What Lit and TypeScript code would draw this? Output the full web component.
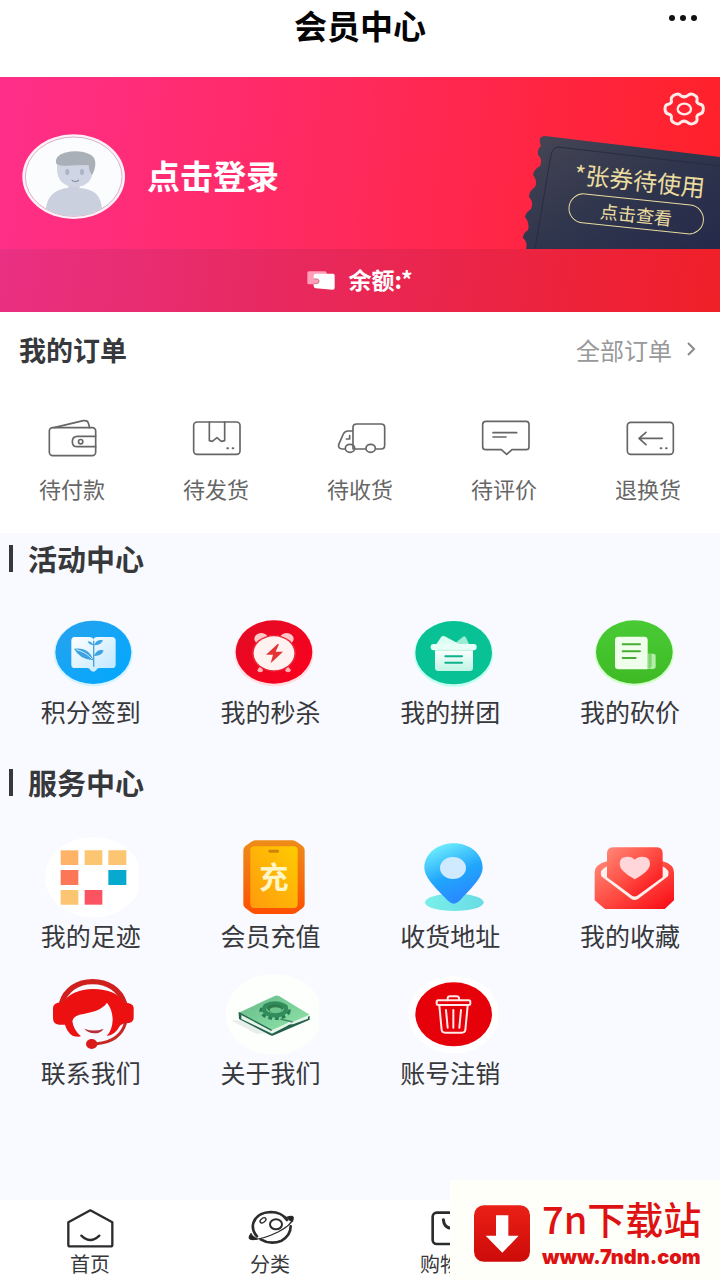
import { LitElement, html, svg, css, TemplateResult } from "lit";
import { customElement } from "lit/decorators.js";

interface Entry {
  label: string;
  view: string;
  art: TemplateResult;
}

const orders: Entry[] = [
  {
    label: "待付款",
    view: "126 288 180 132",
    art: svg`<rect x="148" y="323" width="139" height="84" rx="10"/>
      <path d="M162 323L250 302Q263 300 265 309L269 323M287 349H232Q217 349 217 365Q217 380 232 380H287"/>
      <circle cx="242" cy="365" r="6.500"/>`,
  },
  {
    label: "待发货",
    view: "558 288 180 132",
    art: svg`<rect x="581" y="306" width="139" height="97" rx="10"/>
      <path d="M628 306V362L637 364L651 353L664 364L674 362V306"/>
      <path d="M682 385h2M698 385h2" stroke-width="6"/>`,
  },
  {
    label: "待收货",
    view: "990 288 180 132",
    art: svg`<path d="M1036 387H1027Q1014 386 1016 374L1030 342Q1034 333 1044 333H1059M1059 387V322Q1059 312 1070 312H1143Q1154 312 1154 322V376Q1154 387 1144 387H1127M1096 387H1064M1049 347V357H1039"/>
      <ellipse cx="1050" cy="385" rx="14" ry="12"/><ellipse cx="1112" cy="385" rx="14" ry="12"/>`,
  },
  {
    label: "待评价",
    view: "342 288 180 132",
    art: svg`<path d="M378 304H498Q507 304 507 313V380Q507 389 498 389H456L440 403L424 389H378Q368 389 368 380V313Q368 304 378 304ZM399 338H470M399 351H438"/>`,
  },
  {
    label: "退换货",
    view: "774 288 180 132",
    art: svg`<rect x="802" y="307" width="138" height="96" rx="10"/>
      <path d="M907 355H838M858 337L837 355L858 374"/>
      <path d="M902 385h2M918 385h2" stroke-width="6"/>`,
  },
];

const activities: Entry[] = [
  {
    label: "积分签到",
    view: "126 243 288 252",
    art: svg`<defs><linearGradient id="blue" x1="0" x2="1" y2="1"><stop stop-color="#28a2ee"/><stop offset="1" stop-color="#00a8ff"/></linearGradient>
      <linearGradient id="page" x1="0" x2="1" y2="1"><stop stop-color="#fff"/><stop offset="1" stop-color="#bde6ff"/></linearGradient></defs>
      <ellipse cx="277" cy="370" rx="119" ry="99" fill="#d5f3ff"/>
      <ellipse cx="277" cy="367" rx="114" ry="95" fill="url(#blue)"/>
      <path d="M221 321H264Q277 321 277 330Q277 321 290 321H333Q344 321 344 332V404Q344 414 333 414H296Q288 414 286 420Q277 431 268 420Q266 414 258 414H221Q211 414 211 404V332Q211 321 221 321Z" fill="url(#page)"/>
      <path d="M278 410V332" stroke="#4aa2dc" stroke-width="4"/>
      <path d="M277 391Q265 350 219 356Q236 388 277 391ZM279 378Q288 356 308 361Q303 379 279 378ZM279 346Q287 327 306 331Q301 346 279 346ZM277 345Q272 334 260 334Q263 345 277 345Z" fill="#3da3e2"/>
      <path d="M226 359Q255 366 273 387" stroke="#c8eaff" stroke-width="3" fill="none"/>`,
  },
  {
    label: "我的秒杀",
    view: "666 243 288 252",
    art: svg`<defs><linearGradient id="red" x1="0" x2="1" y2="1"><stop stop-color="#e20c25"/><stop offset="1" stop-color="#fb001e"/></linearGradient></defs>
      <ellipse cx="819" cy="370" rx="119" ry="99" fill="#ffdde2"/>
      <ellipse cx="819" cy="366" rx="115" ry="95" fill="url(#red)"/>
      <path d="M786 404L772 423M852 404L866 423" stroke="#ffc0c0" stroke-width="8"/>
      <ellipse cx="778" cy="421" rx="8" ry="6" fill="#ffb4b4"/><ellipse cx="861" cy="421" rx="8" ry="6" fill="#ffb4b4"/>
      <ellipse cx="781" cy="326" rx="21" ry="17" fill="#ffc9c9"/><ellipse cx="857" cy="326" rx="21" ry="17" fill="#ffc9c9"/>
      <ellipse cx="819" cy="370" rx="66" ry="55" fill="#ee2636"/>
      <ellipse cx="819" cy="370" rx="61" ry="51" fill="#fff2f0"/>
      <path d="M830 342L795 374H816L809 400L846 365H824L834 343Z" fill="#e43434"/>`,
  },
  {
    label: "我的拼团",
    view: "126 243 288 252",
    art: svg`<defs><linearGradient id="basket" x1="0" x2="0" y2="1"><stop stop-color="#fff"/><stop offset="1" stop-color="#bff5e5"/></linearGradient></defs>
      <ellipse cx="281" cy="372" rx="119" ry="99" fill="#c3fff0"/>
      <ellipse cx="281" cy="368" rx="115" ry="95" fill="#08c295"/>
      <path d="M289 337L309 320Q314 316 318 323L328 344H289Z" fill="#9cebd5"/>
      <path d="M228 344L244 320Q248 316 254 319L302 344Z" fill="#dcfff4"/>
      <path d="M225 356H339V414Q339 423 329 423H235Q225 423 225 414Z" fill="url(#basket)"/>
      <rect x="212" y="342" width="138" height="19" rx="9" fill="#e8fff8"/>
      <path d="M225 361H339" stroke="#9ee6d1" stroke-width="2"/>
      <path d="M256 379H306M256 398H306" stroke="#0fb18b" stroke-width="6" stroke-linecap="round"/>`,
  },
  {
    label: "我的砍价",
    view: "666 243 288 252",
    art: svg`<defs><linearGradient id="green" x1="0" x2="0" y2="1"><stop stop-color="#49cb35"/><stop offset="1" stop-color="#3fba25"/></linearGradient></defs>
      <ellipse cx="823" cy="370" rx="119" ry="98" fill="#d2ffc9"/>
      <ellipse cx="823" cy="366" rx="115" ry="95" fill="url(#green)"/>
      <path d="M776 320H853Q863 320 863 330V418H776Q765 418 765 408V330Q765 320 776 320Z" fill="#f0ffec"/>
      <path d="M863 371H880Q887 371 887 377V409Q887 417 878 417H863Z" fill="#b6edab"/>
      <path d="M865 372H875V408Q873 416 865 416Z" fill="#7fd470"/>
      <path d="M788 343H840M788 364H840M788 384H827" stroke="#46ad30" stroke-width="6" stroke-linecap="round"/>`,
  },
];

const services: Entry[] = [
  {
    label: "我的足迹",
    view: "126 252 288 252",
    art: svg`<ellipse cx="277" cy="379" rx="145" ry="121" fill="#fff"/>
      <path d="M179 298h53v44h-53z" fill="#ffb366"/><path d="M251 298h53v44h-53zM322 298h54v44h-54zM179 417h53v44h-53z" fill="#fbc571"/>
      <path d="M179 357h53v45h-53z" fill="#fb7757"/><path d="M322 357h54v45h-54z" fill="#08a9ce"/><path d="M251 417h53v44h-53z" fill="#fb5361"/>`,
  },
  {
    label: "会员充值",
    view: "666 252 288 252",
    art: svg`<defs><linearGradient id="frame" x1="0" x2="0" y2="1"><stop stop-color="#ee8c19"/><stop offset=".6" stop-color="#f56a0c"/><stop offset="1" stop-color="#ff4e00"/></linearGradient>
      <linearGradient id="gold" x1="1" x2="0" y2="1"><stop stop-color="#ffcb00"/><stop offset="1" stop-color="#ff9b0d"/></linearGradient></defs>
      <path d="M764 268H874Q882 268 888 273L905 285Q911 290 911 298V460Q911 467 905 471L888 484Q882 489 874 489H764Q756 489 750 484L733 471Q727 467 727 460V298Q727 290 733 285L750 273Q756 268 764 268Z" fill="url(#frame)"/>
      <rect x="748" y="286" width="142" height="185" rx="12" fill="url(#gold)"/>
      <rect x="802" y="296" width="32" height="9" rx="4" fill="#cc850a"/>
      <text x="819" y="410" class="glyph">充</text>`,
  },
  {
    label: "收货地址",
    view: "126 252 288 252",
    art: svg`<defs><linearGradient id="pin" x1=".2" x2=".6" y2="1"><stop stop-color="#73f2fc"/><stop offset=".55" stop-color="#20a5fc"/><stop offset="1" stop-color="#2b86ff"/></linearGradient>
      <linearGradient id="disc" x1="0" x2="1"><stop stop-color="#79efea"/><stop offset="1" stop-color="#69dce4"/></linearGradient></defs>
      <ellipse cx="283" cy="454" rx="88" ry="26" fill="url(#disc)"/>
      <path d="M281 277C330 277 368 309 368 350C368 382 326 419 297 451Q281 465 266 451C236 419 193 382 193 350C193 309 232 277 281 277Z" fill="url(#pin)"/>
      <ellipse cx="279" cy="351" rx="39" ry="33" fill="#cfeaff"/>`,
  },
  {
    label: "我的收藏",
    view: "666 252 288 252",
    art: svg`<defs><linearGradient id="mail" x1="0" x2="1" y2="1"><stop stop-color="#ff8876"/><stop offset=".5" stop-color="#ff4b42"/><stop offset="1" stop-color="#f90711"/></linearGradient></defs>
      <path d="M741 331Q704 340 704 365V448L735 474H914L942 448V365Q942 340 908 331Z" fill="url(#mail)"/>
      <path d="M743 345Q716 357 724 376L813 443Q824 451 835 443L924 376Q932 357 906 345Z" fill="#fff0ed"/>
      <path d="M762 289H888Q908 289 908 306V379L834 433Q824 440 814 433L741 379V306Q741 289 762 289Z" fill="url(#mail)"/>
      <path d="M824 385Q779 360 779 339Q779 317 802 317Q817 317 824 326Q832 317 847 317Q870 317 870 339Q870 360 824 385Z" fill="#ffd7da"/>`,
  },
  {
    label: "联系我们",
    view: "126 33 288 252",
    art: svg`<path d="M181 128C194 85 230 62 275 62S357 85 371 128" fill="none" stroke="#cf201d" stroke-width="16"/>
      <path d="M187 125Q158 123 156 140V171Q156 190 174 191H192Q198 214 216 225Q231 229 240 226Q217 207 214 180Q216 167 235 161C270 155 302 148 318 125Q334 145 335 176Q334 207 317 225Q341 224 358 193L371 187Q398 188 398 171V140Q397 125 368 125C357 99 320 84 277 84S199 100 187 125Z" fill="#ec1010"/>
      <path d="M374 184Q358 242 287 248" fill="none" stroke="#c62824" stroke-width="9"/>
      <ellipse cx="272" cy="249" rx="17" ry="15" fill="#dc1919"/>
      <path d="M250 203Q280 214 308 203Q299 217 280 217Q261 216 250 203Z" fill="#b72d38"/>`,
  },
  {
    label: "关于我们",
    view: "666 33 288 252",
    art: svg`<defs><linearGradient id="cover" x1="0" x2="1" y2="1"><stop stop-color="#64b987"/><stop offset="1" stop-color="#91e5aa"/></linearGradient></defs>
      <ellipse cx="819" cy="160" rx="145" ry="121" fill="#fdfffc"/>
      <path d="M690 178L724 178L795 216L767 219Z" fill="#e8eeea"/>
      <path d="M713 156L714 174L808 223Q814 226 820 222L926 176V165L875 184Q866 181 860 190L812 211Z" fill="#23604c"/>
      <path d="M721 162L813 207L857 187Q865 178 876 182L921 163V173L876 190Q864 188 858 195L813 218L721 174Z" fill="#e6f5e9"/>
      <path d="M713 155L821 105Q827 102 834 105L926 161L877 182Q865 177 856 188L812 208Z" fill="url(#cover)"/>
      <path d="M713 155L812 208" stroke="#276b50" stroke-width="4"/>
      <path d="M838 174L875 183" stroke="#408c65" stroke-width="4"/>
      <ellipse cx="822" cy="150" rx="42" ry="22" fill="none" stroke="#287d50" stroke-width="10" stroke-dasharray="11 9"/>
      <ellipse cx="822" cy="145" rx="33" ry="18" fill="#7acb93" stroke="#308d5b" stroke-width="13"/>
      <ellipse cx="822" cy="142" rx="24" ry="12" fill="#2c7c4d"/><ellipse cx="824" cy="147" rx="18" ry="8" fill="#6bc58c"/>`,
  },
  {
    label: "账号注销",
    view: "126 33 288 252",
    art: svg`<ellipse cx="281" cy="161" rx="136" ry="116" fill="#fff"/>
      <ellipse cx="281" cy="160" rx="115" ry="96" fill="#e60009"/>
      <g fill="none" stroke="#ffe9e9" stroke-width="6" stroke-linejoin="round" stroke-linecap="round">
      <path d="M263 118V112Q263 106 270 106H289Q297 106 297 112V118M238 134L245 207Q246 215 255 215H306Q315 215 316 207L323 134"/>
      <rect x="230" y="118" width="101" height="14" rx="5"/><path d="M258 147L263 200M280 147V200M303 147L298 200"/></g>`,
  },
];

const tabs: Entry[] = [
  {
    label: "首页",
    view: "180 141 180 132",
    art: svg`<path d="M271 151L337 187V254Q337 259 332 259H210Q205 259 205 254V187Z" stroke-width="7"/><path d="M244 227Q271 253 298 227" stroke-width="7"/>`,
  },
  {
    label: "分类",
    view: "720 141 180 132",
    art: svg`<path d="M771 229Q754 210 760 189Q770 158 812 156Q845 156 861 180M872 199Q872 226 845 242Q812 256 782 238" stroke-width="8"/>
      <path d="M858 173Q881 164 879 175Q876 194 834 216Q785 240 753 238Q743 235 753 222" stroke-width="4"/>
      <path d="M753 221L747 235Q757 243 773 237L759 228ZM860 173L877 169Q882 173 878 185L868 181Z" fill="#222" stroke-width="2"/>
      <ellipse cx="828" cy="193" rx="18" ry="15" stroke-width="6"/><ellipse cx="789" cy="181" rx="10" ry="6" stroke-width="4" transform="rotate(-35 789 181)"/>`,
  },
  {
    label: "购物车",
    view: "180 171 180 132",
    art: svg`<rect x="218" y="188" width="116" height="94" rx="12" stroke-width="8"/><path d="M250 209Q252 235 276 235Q300 235 302 209" stroke-width="9"/>`,
  },
];

@customElement("app-root")
export class AppRoot extends LitElement {
  static styles = css`
    :host {
      display: flex;
      flex-direction: column;
      min-height: 100vh;
      position: relative;
      overflow: hidden;
      background: #f9faff;
      color: #37383c;
      font-family: "Noto Sans CJK SC", sans-serif;
    }
    * { box-sizing: border-box; }
    h1, h2 { margin: 0; }
    a { color: inherit; text-decoration: none; }
    button { border: 0; padding: 0; background: none; color: inherit; font: inherit; display: block; }
    svg { display: block; }

    .top {
      display: grid;
      grid-template-columns: 1fr auto 1fr;
      align-items: start;
      padding: 5px 20px 32px;
      background: #fff;
      color: #050505;
    }
    .title { grid-column: 2; font-size: 33px; line-height: 40px; font-weight: 700; }
    .more { justify-self: end; width: 34px; height: 26px; }

    .hero {
      position: relative;
      overflow: hidden;
      padding: 13px 12px 30px 22px;
      background: linear-gradient(97deg, #ff2f8a, #ff295a 50%, #ff2128);
      color: #fff;
    }
    .settings { margin-left: auto; width: 48px; height: 38px; }
    .login { display: flex; align-items: center; gap: 22px; width: max-content; margin-top: 6px; font-size: 33px; line-height: 40px; font-weight: 700; }
    .login-text { padding-bottom: 3px; }
    .avatar { width: 103px; height: 85px; }
    .coupon { position: absolute; right: 0; bottom: 0; width: 200px; height: 114px; color: #eadb9f; }
    .shape { position: absolute; inset: 0; width: 200px; height: 114px; }
    .offer { position: absolute; top: 30px; left: 50px; width: 136px; display: grid; gap: 4px; transform: rotate(6deg); text-align: center; }
    .offer-text { font-size: 24px; line-height: 30px; white-space: nowrap; }
    .offer-more { font-size: 18px; line-height: 28px; border: 1px solid #eadb9f; border-radius: 16px; }

    .balance {
      display: flex;
      align-items: center;
      justify-content: center;
      gap: 13px;
      padding: 15px 16px 17px;
      background: linear-gradient(97deg, #e93082, #e8285a 45%, #f01f28);
      color: #fff;
      font-size: 23px;
      line-height: 31px;
      font-weight: 700;
    }
    .purse { width: 28px; height: 20px; }

    .orders { background: #fff; padding: 20px 0 30px; }
    .bar { display: flex; justify-content: space-between; align-items: center; padding: 0 23px 0 19px; line-height: 36px; }
    .bar-title { font-size: 27px; font-weight: 700; }
    .all { display: flex; align-items: center; gap: 13px; font-size: 24px; color: #999; }
    .chevron { width: 12px; height: 18px; }
    .row { display: grid; grid-template-columns: repeat(5, 1fr); margin-top: 48px; }
    .order { display: grid; justify-items: center; gap: 13px; font-size: 22px; line-height: 30px; color: #666; }
    .order-icon { width: 60px; height: 44px; fill: none; stroke: #666; stroke-width: 5; stroke-linejoin: round; stroke-linecap: round; }

    .page { flex: 1; }
    .group { padding: 5px 0 30px; }
    .heading { display: flex; align-items: center; gap: 15px; padding-left: 9px; font-size: 29px; line-height: 40px; font-weight: 700; }
    .heading::before { content: ""; width: 4px; height: 27px; background: #37383c; }
    .grid { display: grid; grid-template-columns: repeat(4, 1fr); row-gap: 21px; margin-top: 33px; padding-left: 1px; }
    .tile { display: grid; justify-items: center; font-size: 25px; line-height: 32px; }
    .tile-icon { width: 96px; height: 84px; }
    .glyph { font-size: 88px; font-weight: 700; fill: #fff6c8; text-anchor: middle; }

    .tabs { display: grid; grid-template-columns: repeat(4, 1fr); padding: 7px 0 4px; background: #fff; }
    .tab { display: grid; justify-items: center; gap: 1px; font-size: 20px; line-height: 24px; }
    .tab-icon { width: 60px; height: 44px; fill: none; stroke: #2b2c2e; stroke-linejoin: round; stroke-linecap: round; }

    .site {
      position: absolute;
      right: 0;
      bottom: 0;
      display: flex;
      align-items: center;
      gap: 12px;
      width: 270px;
      height: 100px;
      padding-left: 24px;
      padding-top: 6px;
      background: #fffffa;
      color: #de1212;
    }
    .badge { width: 56px; height: 57px; }
    .names { display: grid; gap: 6px; white-space: nowrap; }
    .site-name { font-size: 38px; line-height: 42px; font-weight: 500; }
    .site-url { font: 900 20px/24px Inter, sans-serif; }
  `;

  private tile(item: Entry) {
    return html`<a class="tile" href="#">
      <svg class="tile-icon" viewBox=${item.view} aria-hidden="true">${item.art}</svg>
      <span>${item.label}</span>
    </a>`;
  }

  private group(name: string, items: Entry[]) {
    return html`<section class="group">
      <h2 class="heading">${name}</h2>
      <div class="grid">${items.map((item) => this.tile(item))}</div>
    </section>`;
  }

  render() {
    return html`
      <header class="top">
        <h1 class="title">会员中心</h1>
        <button class="more" aria-label="更多">
          <svg width="34" height="26" viewBox="0 0 34 26"><g fill="#111"><circle cx="6" cy="13" r="3"/><circle cx="17" cy="13" r="3"/><circle cx="28" cy="13" r="3"/></g></svg>
        </button>
      </header>

      <section class="hero">
        <button class="settings" aria-label="设置">
          <svg width="48" height="38" viewBox="900 270 144 114" fill="none" stroke="#ffece8" stroke-width="9" stroke-linejoin="round">
            <path d="M948 283Q957 280 961 286Q972 295 984 286Q990 280 999 283Q1014 289 1011 300Q1008 309 1020 313Q1030 314 1030 327Q1030 340 1020 342Q1008 345 1011 355Q1014 366 999 371Q990 374 984 368Q972 359 961 368Q957 374 948 371Q932 366 934 355Q937 345 925 342Q915 340 915 327Q915 314 925 313Q937 309 934 300Q932 289 948 283Z"/>
            <ellipse cx="973" cy="327" rx="20" ry="16" stroke-width="7"/>
          </svg>
        </button>
        <a class="login" href="#">
          <svg class="avatar" viewBox="66 402 309 255" aria-hidden="true">
            <defs><clipPath id="face"><ellipse cx="221" cy="530" rx="144" ry="118"/></clipPath></defs>
            <ellipse cx="221" cy="530" rx="154" ry="127" fill="#fff0f7"/>
            <ellipse cx="221" cy="530" rx="145" ry="119" fill="#fbfcfe" stroke="#bf91ae" stroke-width="2"/>
            <g clip-path="url(#face)">
              <path d="M137 650Q134 588 176 571Q195 563 205 564V545H239V564Q266 565 286 579Q308 598 307 650Z" fill="#cbd0de"/>
              <path d="M171 485H279V510Q276 559 226 561Q174 559 171 510Z" fill="#cfd5e2"/>
              <path d="M168 490Q164 467 194 458Q239 448 269 463Q288 471 286 495Q283 516 276 524Q267 515 266 495Q221 495 198 497Q176 499 168 490Z" fill="#a9b0b8"/>
            </g>
            <ellipse cx="202" cy="516" rx="6" ry="9" fill="#abb3c6"/><ellipse cx="246" cy="516" rx="6" ry="9" fill="#abb3c6"/>
            <path d="M214 538Q226 548 237 538V544Q226 549 216 544Z" fill="#8b93a8"/>
          </svg>
          <span class="login-text">点击登录</span>
        </a>
        <a class="coupon" href="#">
          <svg class="shape" viewBox="0 0 200 114" aria-hidden="true">
            <defs><linearGradient id="ticket" x1="0" x2="1" y2="1"><stop stop-color="#474654"/><stop offset=".5" stop-color="#30364d"/><stop offset="1" stop-color="#24294a"/></linearGradient></defs>
            <path d="M25 1L200 22V114H6Q8 107 3 103Q3 98 8 95Q10 88 5 82Q6 77 11 74Q14 67 9 62Q9 56 15 52Q18 46 13 40Q14 34 20 31Q23 24 18 20Q17 14 21 11Q17 1 25 1Z" fill="url(#ticket)"/>
            <path d="M200 31L38 12Q33 12 31 20L15 114" fill="none" stroke="#292d42" stroke-width="1"/>
          </svg>
          <span class="offer"><span class="offer-text">*张券待使用</span><span class="offer-more">点击查看</span></span>
        </a>
      </section>

      <section class="balance">
        <svg class="purse" viewBox="927 808 84 60" aria-hidden="true">
          <rect x="928" y="812" width="58" height="39" rx="5" fill="#ff9eb9"/>
          <path d="M954 819H1005Q1010 819 1010 824V861Q1010 867 1004 867L953 863Q947 862 947 857V850H956Q964 849 964 842Q964 834 956 834H947V825Q947 819 954 819Z" fill="#fff"/>
          <path d="M947 835H956Q963 835 963 842Q963 849 956 849H947" fill="none" stroke="#c77c91" stroke-width="3"/>
        </svg>
        <span>余额:*</span>
      </section>

      <section class="orders">
        <div class="bar">
          <h2 class="bar-title">我的订单</h2>
          <a class="all" href="#">全部订单
            <svg class="chevron" viewBox="0 0 12 18" fill="none" stroke="#8a8a8a" stroke-width="2"><path d="M3 2L9 8L3 14"/></svg>
          </a>
        </div>
        <div class="row">
          ${orders.map(
            (item) => html`<a class="order" href="#">
              <svg class="order-icon" viewBox=${item.view} aria-hidden="true">${item.art}</svg>
              <span>${item.label}</span>
            </a>`
          )}
        </div>
      </section>

      <main class="page">
        ${this.group("活动中心", activities)}
        ${this.group("服务中心", services)}
      </main>

      <nav class="tabs">
        ${tabs.map(
          (item) => html`<a class="tab" href="#">
            <svg class="tab-icon" viewBox=${item.view} aria-hidden="true">${item.art}</svg>
            <span>${item.label}</span>
          </a>`
        )}
      </nav>

      <a class="site" href="#">
        <svg class="badge" viewBox="340 166 168 170" aria-hidden="true">
          <defs><linearGradient id="load" x1="0" x2="0" y2="1"><stop stop-color="#e92016"/><stop offset="1" stop-color="#cd0b09"/></linearGradient></defs>
          <rect x="340" y="166" width="168" height="170" rx="30" fill="url(#load)"/>
          <path d="M406 196H443V258H474L425 309L375 258H406Z" fill="#fff"/>
        </svg>
        <span class="names"><span class="site-name">7n下载站</span><span class="site-url">www.7ndn.com</span></span>
      </a>
    `;
  }
}
